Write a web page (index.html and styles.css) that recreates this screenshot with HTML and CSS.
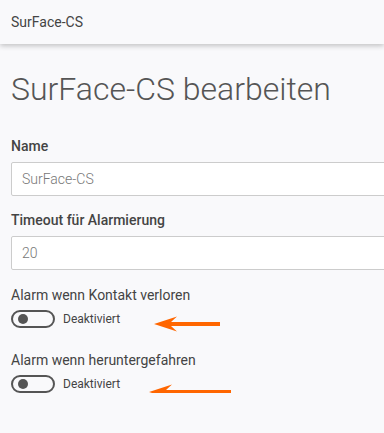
FILE: index.html
```html
<!DOCTYPE html>
<html lang="de">
<head>
    <meta charset="UTF-8">
    <meta name="viewport" content="width=device-width, initial-scale=1.0">
    <title>SurFace-CS bearbeiten</title>
    <link rel="stylesheet" href="styles.css">
</head>
<body>

    <!-- Kopfzeile -->
    <header class="top-bar">SurFace-CS</header>

    <main class="content">
        <h1 class="page-title">SurFace-CS bearbeiten</h1>

        <div class="field field-first">
            <label class="field-label">Name</label>
            <input class="field-input" type="text" value="SurFace-CS">
        </div>

        <div class="field">
            <label class="field-label">Timeout für Alarmierung</label>
            <input class="field-input" type="text" value="20">
        </div>

        <div class="switch-field">
            <div class="switch-label">Alarm wenn Kontakt verloren</div>
            <div class="switch-row">
                <span class="switch"><span class="knob"></span></span>
                <span class="switch-text">Deaktiviert</span>
                <svg class="hint-arrow arrow-one" width="66" height="16" viewBox="0 0 66 16">
                    <path d="M0 8 L23 0.5 L17 6 L66 6 L66 10 L17 10 L23 15.5 Z" fill="#ff6600"/>
                </svg>
            </div>
        </div>

        <div class="switch-field switch-second">
            <div class="switch-label">Alarm wenn heruntergefahren</div>
            <div class="switch-row">
                <span class="switch"><span class="knob"></span></span>
                <span class="switch-text">Deaktiviert</span>
                <svg class="hint-arrow arrow-two" width="82" height="16" viewBox="0 0 82 16">
                    <path d="M0 8 L23 0.5 L17 6 L82 6 L82 10 L17 10 L23 15.5 Z" fill="#ff6600"/>
                </svg>
            </div>
        </div>
    </main>

</body>
</html>
```

FILE: styles.css
```css
/* Style global */
body, html {
    margin: 0;
    padding: 0;
    font-family: Roboto, "Liberation Sans", sans-serif;
    background-color: #f9f9fb;
    color: #333;
    overflow: hidden;
}

/* Kopfzeile */
.top-bar {
    height: 44px;
    line-height: 44px;
    padding-left: 11px;
    font-size: 14px;
    color: #444;
    background-color: #f9f9fb;
    box-shadow: 0 2px 5px rgba(0, 0, 0, 0.22);
    position: relative;
}

.content {
    padding: 0 0 0 11px;
    overflow: hidden;
}

.page-title {
    font-size: 32px;
    font-weight: 300;
    color: #555;
    margin: 26px 0 0;
    line-height: 38px;
}

/* Formularfelder */
.field {
    margin-top: 15px;
}

.field-first {
    margin-top: 29px;
}

.field-label {
    display: block;
    font-size: 14px;
    font-weight: 500;
    color: #444;
    line-height: 18px;
}

.field-input {
    display: block;
    box-sizing: border-box;
    width: calc(100% + 10px);
    height: 34px;
    margin-top: 7px;
    padding: 0 10px;
    border: 1px solid #ccc;
    border-radius: 2px;
    background-color: #fff;
    font-family: inherit;
    font-size: 14px;
    font-weight: 300;
    color: #777;
    outline: none;
}

/* Schalter */
.switch-field {
    margin-top: 16px;
}

.switch-second {
    margin-top: 23px;
}

.switch-label {
    font-size: 14px;
    color: #444;
    line-height: 18px;
}

.switch-row {
    display: flex;
    align-items: center;
    height: 18px;
    margin-top: 6px;
}

.switch {
    box-sizing: border-box;
    width: 44px;
    height: 18px;
    border: 2px solid #555;
    border-radius: 9px;
    display: flex;
    align-items: center;
    padding-left: 5px;
}

.knob {
    width: 10px;
    height: 10px;
    border-radius: 50%;
    background-color: #555;
}

.switch-text {
    font-size: 12px;
    color: #444;
    margin-left: 8px;
}

.arrow-one {
    margin-left: 34px;
    margin-top: 10px;
}

.arrow-two {
    margin-left: 29px;
    margin-top: 15px;
}
```
